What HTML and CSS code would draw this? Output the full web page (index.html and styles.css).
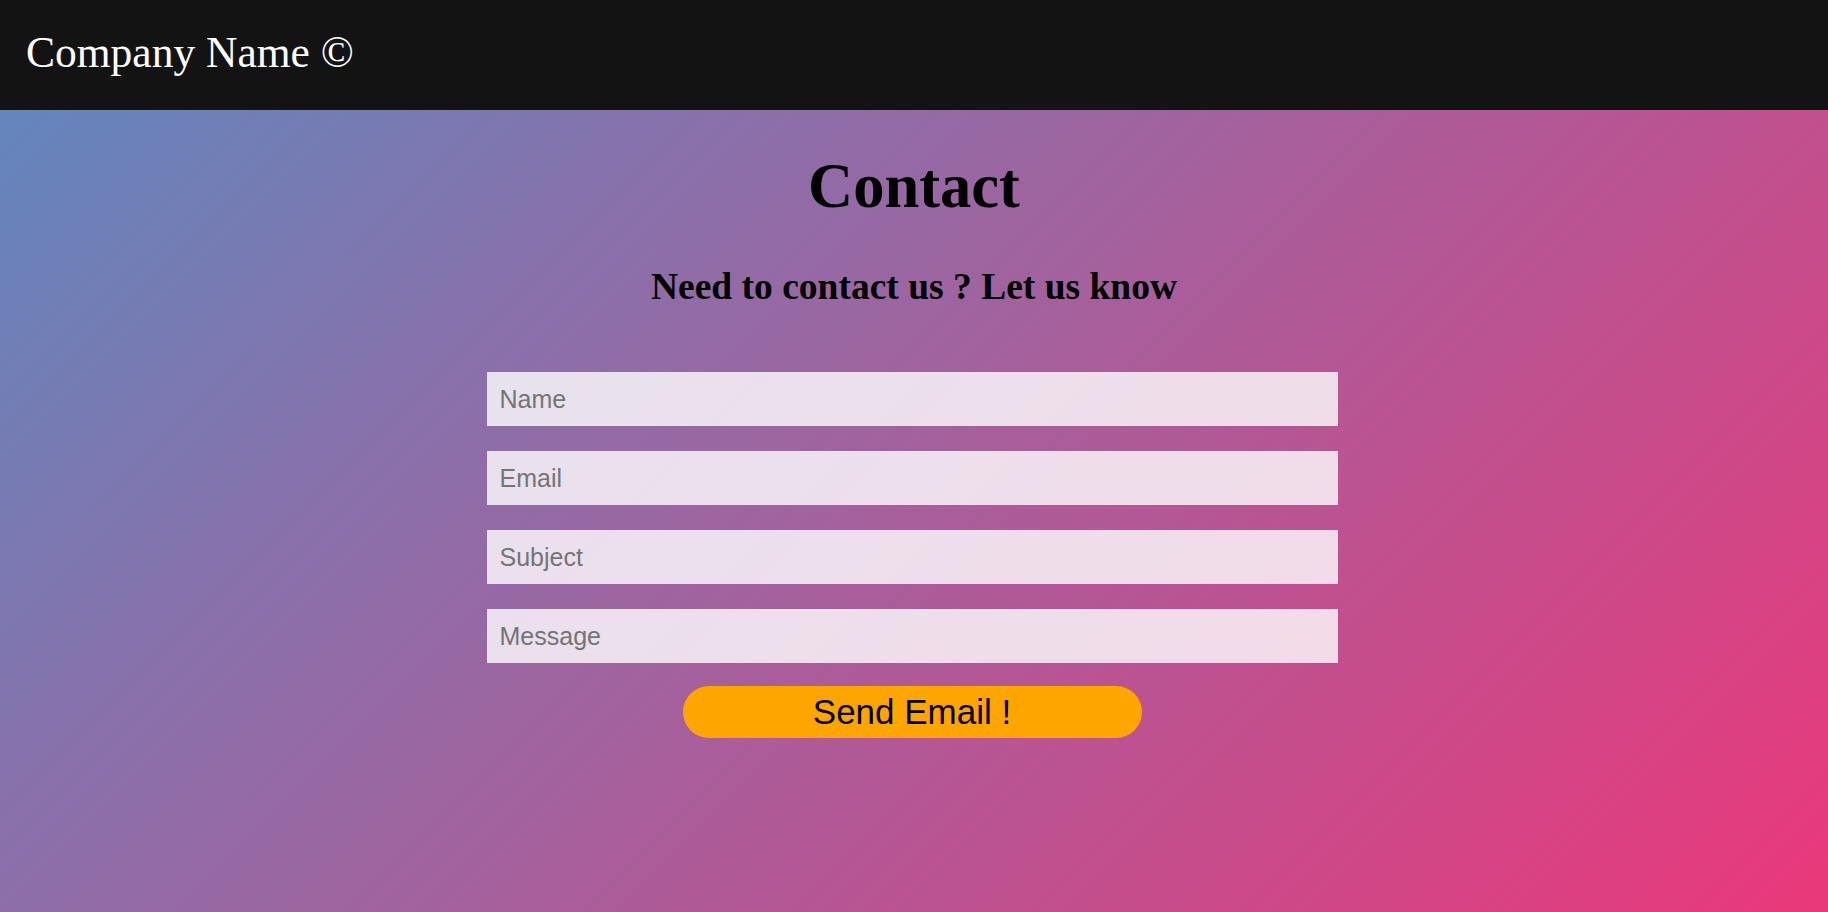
FILE: index.html
```html
<!DOCTYPE html>
<html lang="en">
<head>
<meta charset="utf-8">
<title>Contact</title>
<link rel="stylesheet" href="styles.css">
</head>
<body>
<header class="topbar">
  <div class="brand">Company Name &copy;</div>
</header>
<main class="page">
  <h1 class="title">Contact</h1>
  <h2 class="subtitle">Need to contact us ? Let us know</h2>
  <form class="contact-form">
    <input class="field" type="text" placeholder="Name">
    <input class="field" type="email" placeholder="Email">
    <input class="field" type="text" placeholder="Subject">
    <input class="field" type="text" placeholder="Message">
    <button class="send" type="button">Send Email !</button>
  </form>
</main>
</body>
</html>
```

FILE: styles.css
```css
* {
  box-sizing: border-box;
}

html, body {
  margin: 0;
  padding: 0;
  height: 100%;
}

body {
  font-family: "Liberation Serif", "Times New Roman", serif;
  display: flex;
  flex-direction: column;
  min-height: 912px;
}

.topbar {
  background: #131313;
  height: 110px;
  flex: 0 0 110px;
  padding: 27px 0 0 26px;
}

.brand {
  color: #ffffff;
  font-size: 43.5px;
  line-height: normal;
}

.page {
  flex: 1;
  background: linear-gradient(135deg, #6486bd 0%, #ea387a 100%);
  display: flex;
  flex-direction: column;
  align-items: center;
  padding-top: 40px;
}

.title {
  margin: 0;
  font-size: 62.5px;
  font-weight: bold;
  line-height: normal;
  color: #000;
}

.subtitle {
  margin: 42px 0 0;
  font-size: 37.5px;
  font-weight: bold;
  line-height: normal;
  color: #000;
}

.contact-form {
  margin-top: 64px;
  width: 851px;
  display: flex;
  flex-direction: column;
  align-items: center;
  gap: 25px;
  margin-left: -4px;
}

.field {
  width: 851px;
  height: 54px;
  border: none;
  outline: none;
  background: rgba(255, 255, 255, 0.8);
  font-family: "Liberation Sans", Arial, sans-serif;
  font-size: 25px;
  padding: 0 13px;
  color: #333;
}

.field::placeholder {
  color: #757575;
}

.send {
  margin-top: -2px;
  width: 459px;
  height: 52px;
  border: none;
  border-radius: 26px;
  background: #ffa500;
  color: #000;
  font-family: "Liberation Sans", Arial, sans-serif;
  font-size: 35px;
  padding: 0;
  cursor: pointer;
}
```
